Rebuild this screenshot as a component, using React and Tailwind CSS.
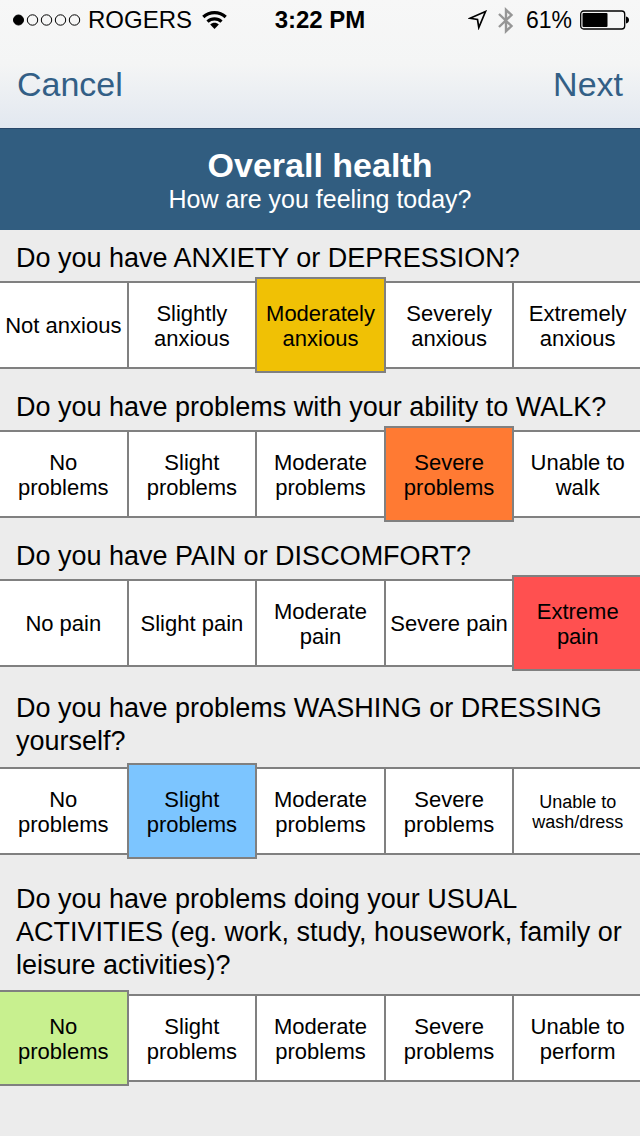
import { useState } from "react";

const PROBLEMS = [["No", "problems"], ["Slight", "problems"], ["Moderate", "problems"], ["Severe", "problems"]];

const QUESTIONS = [
  {
    id: "anxiety",
    text: "Do you have ANXIETY or DEPRESSION?",
    spacing: "pt-[12px] pb-[6px]",
    answer: 2,
    options: [["Not anxious"], ["Slightly", "anxious"], ["Moderately", "anxious"], ["Severely", "anxious"], ["Extremely", "anxious"]],
  },
  {
    id: "walk",
    text: "Do you have problems with your ability to WALK?",
    spacing: "pt-[22px] pb-[6px]",
    answer: 3,
    options: [...PROBLEMS, ["Unable to", "walk"]],
  },
  {
    id: "pain",
    text: "Do you have PAIN or DISCOMFORT?",
    spacing: "pt-[22px] pb-[6px]",
    answer: 4,
    options: [["No pain"], ["Slight pain"], ["Moderate", "pain"], ["Severe pain"], ["Extreme", "pain"]],
  },
  {
    id: "washing",
    text: "Do you have problems WASHING or DRESSING yourself?",
    spacing: "pt-[25px] pb-[9px]",
    answer: 1,
    options: [...PROBLEMS, ["Unable to", "wash/dress"]],
    smallLast: true,
  },
  {
    id: "activities",
    text: "Do you have problems doing your USUAL ACTIVITIES (eg. work, study, housework, family or leisure activities)?",
    spacing: "pt-[28px] pb-[12px]",
    answer: 0,
    options: [...PROBLEMS, ["Unable to", "perform"]],
  },
];

const LEVEL_COLORS = ["bg-[#c8f08f]", "bg-[#7cc5ff]", "bg-[#f0c105]", "bg-[#ff7a33]", "bg-[#ff5050]"];

function StatusBar() {
  return (
    <div className="grid h-10 grid-cols-[1fr_auto_1fr] items-center px-3 text-black">
      <div className="flex items-center">
        <svg className="h-3 w-[70px]" viewBox="0 0 70 12" fill="none" stroke="currentColor" aria-label="Signal strength">
          <circle cx="6.5" cy="6" r="5" fill="currentColor" />
          <circle cx="20.5" cy="6" r="5.2" />
          <circle cx="34.5" cy="6" r="5.2" />
          <circle cx="48.5" cy="6" r="5.2" />
          <circle cx="62.5" cy="6" r="5.2" />
        </svg>
        <span className="ml-1.5 text-[24px] leading-7">ROGERS</span>
        <svg className="ml-2.5 h-[18px] w-[25px]" viewBox="0 0 25 18" fill="none" stroke="currentColor" strokeWidth="3.2" aria-label="Wi-Fi">
          <path d="M1.3 6C7.500 0.200 17.500 0.200 23.700 6" />
          <path d="M5.500 10.700C9.500 7 15.500 7 19.500 10.700" />
          <path d="M8.200 13.500C10.500 11.300 14.500 11.300 16.800 13.500L12.500 18Z" fill="currentColor" stroke="none" />
        </svg>
      </div>
      <span className="text-[24px] leading-7 font-bold">3:22 PM</span>
      <div className="flex items-center justify-end">
        <svg className="h-5 w-5" viewBox="0 0 20 20" fill="none" stroke="currentColor" strokeWidth="1.7" aria-label="Location">
          <path d="M17.500 1.500L2 8.300L9.500 9.500L10.800 17.500Z" />
        </svg>
        <svg className="ml-2.5 h-[27px] w-4 text-[#969696]" viewBox="0 0 16 27" fill="none" stroke="currentColor" strokeWidth="2.4" aria-label="Bluetooth">
          <path d="M1 7L13.500 19L8 24.2V2.800L13.500 8L1 20" />
        </svg>
        <span className="ml-3 text-[23px] leading-7">61%</span>
        <svg className="ml-2 -mr-0.5 h-5 w-[50px]" viewBox="0 0 50 20" aria-label="Battery">
          <rect x="0.7" y="1" width="44" height="18" rx="3" fill="none" stroke="currentColor" strokeWidth="1.3" />
          <rect x="2.5" y="3" width="25" height="14" rx="1" fill="currentColor" />
          <path d="M46 6.500C50 7 50 13 46 13.500Z" fill="currentColor" />
        </svg>
      </div>
    </div>
  );
}

function Question({ question }) {
  const [answer, setAnswer] = useState(question.answer);
  return (
    <fieldset className="min-w-0">
      <legend className={`px-4 text-[27px] leading-[33px] ${question.spacing}`}>{question.text}</legend>
      <div className="-mr-[3px] -ml-0.5 flex h-[88px]">
        {question.options.map((lines, i) => {
          const selected = i === answer;
          const small = question.smallLast && i === question.options.length - 1;
          return (
            <label
              key={i}
              className={`flex flex-1 cursor-pointer flex-col items-center justify-center border-2 border-[#808080] text-center whitespace-nowrap ${i > 0 ? "-ml-0.5" : ""} ${lines.length > 1 ? "pt-0.5" : ""} ${small ? "text-[18px] leading-5" : "text-[22px] leading-[25px]"} ${selected ? `z-10 -my-1 ${LEVEL_COLORS[i]}` : "bg-white"}`}
            >
              <input
                type="radio"
                name={question.id}
                className="sr-only"
                checked={selected}
                onChange={() => setAnswer(i)}
              />
              {lines.map((line) => (
                <span key={line}>{line} </span>
              ))}
            </label>
          );
        })}
      </div>
    </fieldset>
  );
}

export default function App() {
  return (
    <div className="min-h-screen overflow-x-hidden bg-[#ececec] font-['Liberation_Sans',Arial,sans-serif] text-black">
      <header className="border-b border-[#29486a] bg-linear-to-b from-[#f7f7f7] via-[#f4f5f5] to-[#e2e8f0]">
        <StatusBar />
        <nav className="flex h-[88px] items-center justify-between px-[17px] text-[34px] leading-10 text-[#335f86]">
          <button type="button">Cancel</button>
          <button type="button">Next</button>
        </nav>
      </header>
      <main>
        <div className="bg-[#315d80] pt-4 pb-4 text-center text-white">
          <h1 className="text-[34px] leading-10 font-bold">Overall health</h1>
          <p className="text-[25px] leading-[29px]">How are you feeling today?</p>
        </div>
        <form className="pb-8">
          {QUESTIONS.map((question) => (
            <Question key={question.id} question={question} />
          ))}
        </form>
      </main>
    </div>
  );
}
